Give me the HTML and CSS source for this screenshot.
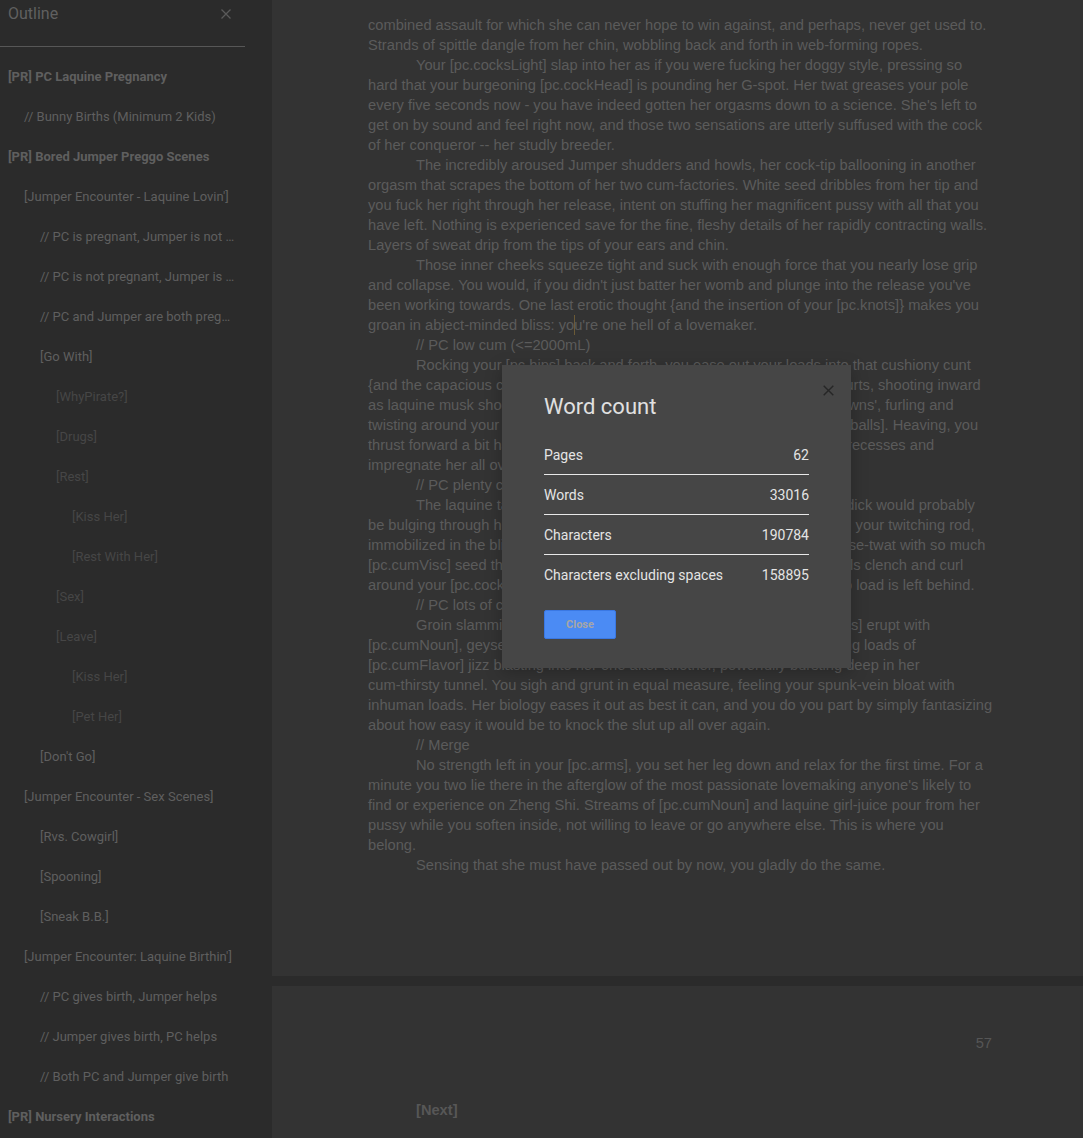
FILE: index.html
```html
<!DOCTYPE html>
<html lang="en">
<head>
<meta charset="utf-8">
<title>Word count</title>
<link rel="stylesheet" href="styles.css">
</head>
<body>
<div class="app">
  <aside class="sidebar">
    <div class="outline">
      <div class="outline-head">
        <span class="outline-title">Outline</span>
        <svg class="outline-close" viewBox="0 0 10 10" width="10" height="10"><path d="M0.5 0.5L9.5 9.5M9.5 0.5L0.5 9.5"/></svg>
      </div>
      <ul class="outline-list">
        <li class="ol-item l0">[PR] PC Laquine Pregnancy</li>
        <li class="ol-item l1">// Bunny Births (Minimum 2 Kids)</li>
        <li class="ol-item l0">[PR] Bored Jumper Preggo Scenes</li>
        <li class="ol-item l1">[Jumper Encounter - Laquine Lovin']</li>
        <li class="ol-item l2">// PC is pregnant, Jumper is not pregnant</li>
        <li class="ol-item l2">// PC is not pregnant, Jumper is pregnant</li>
        <li class="ol-item l2">// PC and Jumper are both pregnant</li>
        <li class="ol-item l2">[Go With]</li>
        <li class="ol-item l3">[WhyPirate?]</li>
        <li class="ol-item l3">[Drugs]</li>
        <li class="ol-item l3">[Rest]</li>
        <li class="ol-item l4">[Kiss Her]</li>
        <li class="ol-item l4">[Rest With Her]</li>
        <li class="ol-item l3">[Sex]</li>
        <li class="ol-item l3">[Leave]</li>
        <li class="ol-item l4">[Kiss Her]</li>
        <li class="ol-item l4">[Pet Her]</li>
        <li class="ol-item l2">[Don't Go]</li>
        <li class="ol-item l1">[Jumper Encounter - Sex Scenes]</li>
        <li class="ol-item l2">[Rvs. Cowgirl]</li>
        <li class="ol-item l2">[Spooning]</li>
        <li class="ol-item l2">[Sneak B.B.]</li>
        <li class="ol-item l1">[Jumper Encounter: Laquine Birthin']</li>
        <li class="ol-item l2">// PC gives birth, Jumper helps</li>
        <li class="ol-item l2">// Jumper gives birth, PC helps</li>
        <li class="ol-item l2">// Both PC and Jumper give birth</li>
        <li class="ol-item l0">[PR] Nursery Interactions</li>
      </ul>
    </div>
  </aside>

  <main class="docs">
    <div class="page page-one">
      <p class="para cont">combined assault for which she can never hope to win against, and perhaps, never get used to. Strands of spittle dangle from her chin, wobbling back and forth in web-forming ropes.</p>
      <p class="para">Your [pc.cocksLight] slap into her as if you were fucking her doggy style, pressing so hard that your burgeoning [pc.cockHead] is pounding her G-spot. Her twat greases your pole every five seconds now - you have indeed gotten her orgasms down to a science. She's left to get on by sound and feel right now, and those two sensations are utterly suffused with the cock of her conqueror -- her studly breeder.</p>
      <p class="para">The incredibly aroused Jumper shudders and howls, her cock-tip ballooning in another orgasm that scrapes the bottom of her two cum-factories. White seed dribbles from her tip and you fuck her right through her release, intent on stuffing her magnificent pussy with all that you have left. Nothing is experienced save for the fine, fleshy details of her rapidly contracting walls. Layers of sweat drip from the tips of your ears and chin.</p>
      <p class="para">Those inner cheeks squeeze tight and suck with enough force that you nearly lose grip and collapse. You would, if you didn't just batter her womb and plunge into the release you've been working towards. One last erotic thought {and the insertion of your [pc.knots]} makes you groan in abject-minded bliss: yo<span class="caret"></span>u're one hell of a lovemaker.</p>
      <p class="para">// PC low cum (&lt;=2000mL)</p>
      <p class="para">Rocking your [pc.hips] back and forth, you ease out your loads into that cushiony cunt {and the capacious confines of her [pc.cockNoun]}. Your [pc.cumNoun] spurts, shooting inward as laquine musk shoots deep into her, painting all her walls with 'cream gowns', furling and twisting around your [pc.cockNoun] as she drains each drop from your [pc.balls]. Heaving, you thrust forward a bit harder, pushing your virile seed deep into her deepest recesses and impregnate her all over again.</p>
      <p class="para">// PC plenty cum (&lt;=10000mL)</p>
      <p class="para">The laquine takes so much that the outline of your hot, thrumming dick would probably be bulging through her tummy if she weren't so thoroughly sealed down on your twitching rod, immobilized in the bliss of emptying your [pc.balls] into her tight, eager horse-twat with so much [pc.cumVisc] seed that her belly visibly bulges outwards, and her inner walls clench and curl around your [pc.cockNoun], milking you for everything you're worth until no load is left behind.</p>
      <p class="para">// PC lots of cum (&gt;10000mL)</p>
      <p class="para">Groin slamming hard against her plush rear, your spasming [pc.balls] erupt with [pc.cumNoun], geysers of hot spunk filling her needy womb with overflowing loads of [pc.cumFlavor] jizz blasting into her one after another, powerfully bursting deep in her <span class="nowrap">cum-thirsty</span> tunnel. You sigh and grunt in equal measure, feeling your spunk-vein bloat with inhuman loads. Her biology eases it out as best it can, and you do you part by simply fantasizing about how easy it would be to knock the slut up all over again.</p>
      <p class="para">// Merge</p>
      <p class="para">No strength left in your [pc.arms], you set her leg down and relax for the first time. For a minute you two lie there in the afterglow of the most passionate lovemaking anyone's likely to find or experience on Zheng Shi. Streams of [pc.cumNoun] and laquine girl-juice pour from her pussy while you soften inside, not willing to leave or go anywhere else. This is where you belong.</p>
      <p class="para">Sensing that she must have passed out by now, you gladly do the same.</p>
    </div>
    <div class="page-gap"></div>
    <div class="page page-two">
      <div class="page-header">57</div>
      <p class="para next-link"><b>[Next]</b></p>
    </div>

    <div class="dialog" role="dialog" aria-label="Word count">
      <svg class="dialog-close" viewBox="0 0 11 11" width="11" height="11"><path d="M0.7 0.7L10.3 10.3M10.3 0.7L0.7 10.3"/></svg>
      <h2 class="dialog-title">Word count</h2>
      <div class="stat-row"><span>Pages</span><span>62</span></div>
      <div class="stat-row"><span>Words</span><span>33016</span></div>
      <div class="stat-row"><span>Characters</span><span>190784</span></div>
      <div class="stat-row last"><span>Characters excluding spaces</span><span>158895</span></div>
      <button class="btn-close" type="button">Close</button>
    </div>
  </main>
</div>
</body>
</html>
```

FILE: styles.css
```css
* { box-sizing: border-box; }

html, body {
  margin: 0;
  padding: 0;
}

body {
  width: 1083px;
  height: 1138px;
  overflow: hidden;
  background: #333333;
  font-family: Roboto, "Noto Sans", "Liberation Sans", Arial, sans-serif;
}

.app {
  display: flex;
  height: 1138px;
}

/* ---------- Outline sidebar ---------- */
.sidebar {
  width: 272px;
  flex: none;
  background: #2b2b2b;
  overflow: hidden;
}

.outline {
  width: 245px;
}

.outline-head {
  height: 47px;
  border-bottom: 1px solid #575757;
  display: flex;
  justify-content: space-between;
  align-items: flex-start;
  padding: 0 14px 0 8px;
}

.outline-title {
  font-size: 16px;
  line-height: 28px;
  color: #606060;
}

.outline-close {
  margin-top: 9px;
  stroke: #5a5a5a;
  stroke-width: 1.3;
  fill: none;
}

.outline-list {
  list-style: none;
  margin: 0;
  padding: 10px 9px 0 0;
}

.ol-item {
  height: 40px;
  line-height: 40px;
  font-size: 13px;
  color: #5f5f5f;
  white-space: nowrap;
  overflow: hidden;
  text-overflow: ellipsis;
}

.ol-item.l0 { padding-left: 8px; font-weight: 700; }
.ol-item.l1 { padding-left: 24px; }
.ol-item.l2 { padding-left: 40px; }
.ol-item.l3 { padding-left: 56px; color: #464646; }
.ol-item.l4 { padding-left: 72px; color: #464646; }

/* ---------- Document area ---------- */
.docs {
  flex: 1;
  position: relative;
  overflow: hidden;
  background: #333333;
}

.page {
  width: 816px;
  padding: 0 94px 0 96px;
  background: #333333;
}

.page-one {
  height: 976px;
  padding-top: 15px;
}

.page-gap {
  height: 10px;
  background: #2b2b2b;
}

.page-two {
  padding-top: 47px;
  padding-right: 96px;
  height: 152px;
}

.para {
  margin: 0;
  font-family: "Liberation Sans", Arial, sans-serif;
  font-size: 14.667px;
  line-height: 20px;
  color: #5b5b5b;
  text-indent: 48px;
}

.para.cont { text-indent: 0; }

.nowrap { white-space: nowrap; }

.caret {
  display: inline-block;
  width: 0;
  height: 20px;
  border-left: 1px solid #6b5a36;
  vertical-align: -5px;
  margin-right: -1px;
}

.page-header {
  font-family: "Liberation Sans", Arial, sans-serif;
  font-size: 14.667px;
  line-height: 20px;
  color: #565656;
  text-align: right;
}

.next-link {
  margin-top: 47px;
  color: #575757;
}

/* ---------- Word count dialog ---------- */
.dialog {
  position: absolute;
  top: 365px;
  left: 230px;
  width: 349px;
  padding: 28px 42px 29px;
  background: #464646;
  box-shadow: 0 4px 16px rgba(0, 0, 0, 0.25);
}

.dialog-close {
  position: absolute;
  top: 20px;
  right: 17px;
  stroke: #262626;
  stroke-width: 1.4;
  fill: none;
}

.dialog-title {
  margin: 0 0 14px;
  font-size: 22px;
  line-height: 28px;
  font-weight: 400;
  color: #e0e0e0;
}

.stat-row {
  height: 40px;
  display: flex;
  justify-content: space-between;
  align-items: center;
  border-bottom: 1px solid #e8e8e8;
  font-size: 14px;
  color: #e4e4e4;
}

.stat-row.last {
  border-bottom: 0;
}

.btn-close {
  display: block;
  margin-top: 15px;
  width: 72px;
  height: 29px;
  padding: 0;
  background: #4b8bf4;
  border: 1px solid #3a78e3;
  border-radius: 2px;
  font-family: Roboto, "Noto Sans", Arial, sans-serif;
  font-size: 11px;
  font-weight: 700;
  color: #a6a6a6;
}
```
